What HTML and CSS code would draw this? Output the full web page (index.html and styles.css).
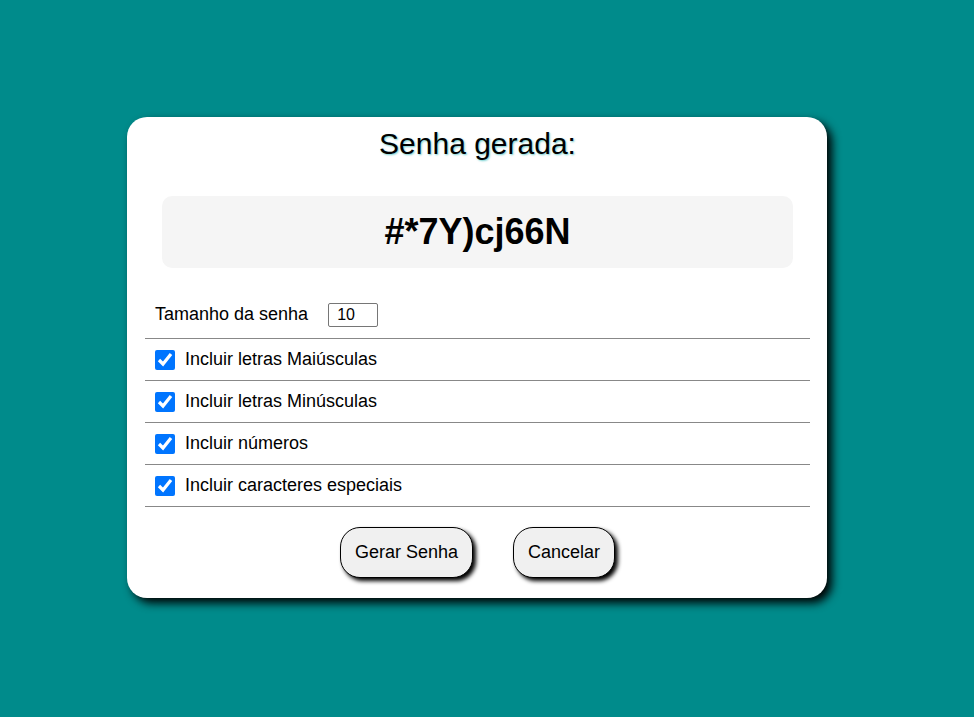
FILE: index.html
```html
<!DOCTYPE html>
<html lang="pt-BR">
<head>
<meta charset="utf-8">
<title>Gerador de Senha</title>
<link rel="stylesheet" href="styles.css">
</head>
<body>
<main class="page">
  <section class="card">
    <h1 class="title">Senha gerada:</h1>
    <div class="password">#*7Y)cj66N</div>
    <div class="options">
      <div class="row row-first">
        <label class="label" for="len">Tamanho da senha</label>
        <input class="num" id="len" type="text" value="10">
      </div>
      <label class="row"><input class="check" type="checkbox" checked><span>Incluir letras Maiúsculas</span></label>
      <label class="row"><input class="check" type="checkbox" checked><span>Incluir letras Minúsculas</span></label>
      <label class="row"><input class="check" type="checkbox" checked><span>Incluir números</span></label>
      <label class="row"><input class="check" type="checkbox" checked><span>Incluir caracteres especiais</span></label>
    </div>
    <div class="actions">
      <button class="btn" type="button">Gerar Senha</button>
      <button class="btn" type="button">Cancelar</button>
    </div>
  </section>
</main>
</body>
</html>
```

FILE: styles.css
```css
* { box-sizing: border-box; }
html, body { margin: 0; height: 100%; }
body {
  background: #008b8b;
  font-family: "Liberation Sans", Arial, sans-serif;
  color: #000;
}
.page {
  height: 717px;
  display: flex;
  align-items: center;
  justify-content: center;
  padding: 0 20px 2px 0;
}
.card {
  width: 700px;
  height: 481px;
  background: #fff;
  border-radius: 20px;
  box-shadow: 5px 5px 10px #000;
  padding: 10px 17px 20px 18px;
  display: flex;
  flex-direction: column;
}
.title {
  margin: 0;
  font-size: 30px;
  font-weight: normal;
  text-align: center;
  line-height: 34px;
  text-shadow: 1px 1px 2px rgba(0, 170, 170, 0.55);
}
.password {
  margin: 35px 17px 29px 17px;
  background: #f5f5f5;
  border-radius: 10px;
  padding: 15px;
  height: 72px;
  font-size: 36px;
  font-weight: bold;
  line-height: 42px;
  text-align: center;
}
.options { display: flex; flex-direction: column; }
.row {
  display: flex;
  align-items: center;
  height: 42px;
  padding: 0 10px;
  border-bottom: 1px solid #888;
  font-size: 18px;
}
.row-first { padding-bottom: 6px; }
.label { margin-right: 20px; }
.num {
  width: 50px;
  height: 24px;
  border: 1px solid #767676;
  border-radius: 2px;
  padding: 0 8px;
  font-family: "Liberation Sans", Arial, sans-serif;
  font-size: 16px;
  color: #000;
}
.check {
  width: 20px;
  height: 20px;
  margin: 0 10px 0 0;
  accent-color: #0075ff;
}
.actions {
  display: flex;
  justify-content: center;
  gap: 40px;
  margin-top: 20px;
}
.btn {
  font-family: "Liberation Sans", Arial, sans-serif;
  font-size: 18px;
  line-height: 21px;
  padding: 14px 14px;
  background: #f0f0f0;
  color: #000;
  border: 1px solid #000;
  border-radius: 20px;
  box-shadow: 3px 3px 4px #000;
}
```
